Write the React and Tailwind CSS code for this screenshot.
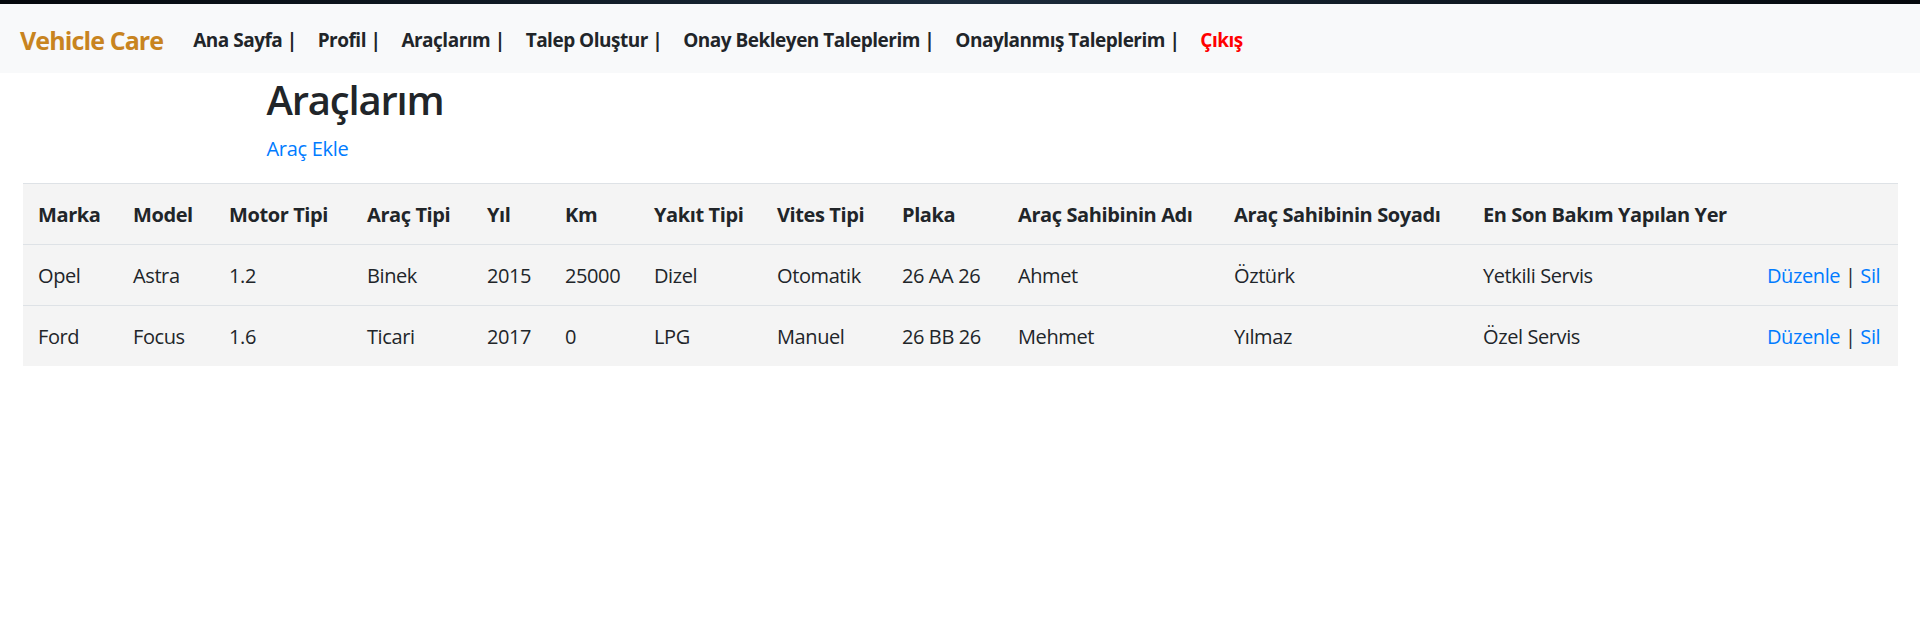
const navLinks = [
  'Ana Sayfa |',
  'Profil |',
  'Araçlarım |',
  'Talep Oluştur |',
  'Onay Bekleyen Taleplerim |',
  'Onaylanmış Taleplerim |',
]

const columns = [
  { title: 'Marka', w: 'w-[95px]' },
  { title: 'Model', w: 'w-[96px]' },
  { title: 'Motor Tipi', w: 'w-[138px]' },
  { title: 'Araç Tipi', w: 'w-[120px]' },
  { title: 'Yıl', w: 'w-[78px]' },
  { title: 'Km', w: 'w-[89px]' },
  { title: 'Yakıt Tipi', w: 'w-[123px]' },
  { title: 'Vites Tipi', w: 'w-[125px]' },
  { title: 'Plaka', w: 'w-[116px]' },
  { title: 'Araç Sahibinin Adı', w: 'w-[216px]' },
  { title: 'Araç Sahibinin Soyadı', w: 'w-[249px]' },
  { title: 'En Son Bakım Yapılan Yer', w: 'w-[284px]' },
  { title: '', w: 'w-[146px]' },
]

const vehicles = [
  ['Opel', 'Astra', '1.2', 'Binek', '2015', '25000', 'Dizel', 'Otomatik', '26 AA 26', 'Ahmet', 'Öztürk', 'Yetkili Servis'],
  ['Ford', 'Focus', '1.6', 'Ticari', '2017', '0', 'LPG', 'Manuel', '26 BB 26', 'Mehmet', 'Yılmaz', 'Özel Servis'],
]

const App = () => {
  return (
    <div className="min-h-screen bg-white text-[#212529] font-['Open_Sans',sans-serif]">

      {/* background strip above the navbar */}
      <div className="h-[4px] bg-gradient-to-r from-[#05080c] via-[#1c2c3c] to-[#05080c]"></div>

      <nav className="h-[69px] bg-[#f8f9fa] flex items-center pt-[4px] pl-[20px]">
        <span className="text-[25px] font-bold text-[#c8841f] tracking-[-0.9px] mr-[30px]">Vehicle Care</span>
        <ul className="flex items-center gap-[21px] text-[19px] font-bold tracking-[-0.5px]">
          {navLinks.map((link) => (
            <li key={link} className="whitespace-nowrap">{link}</li>
          ))}
          <li className="text-[#ff0000]">Çıkış</li>
        </ul>
      </nav>

      <div className="mx-auto w-[1425px] px-[19px] pt-[3px]">
        <h2 className="text-[40px] font-semibold leading-[48px] mb-[10px] tracking-[-1.2px]">Araçlarım</h2>
        <p className="text-[20px] leading-[30px] mb-[19px]">
          <a className="text-[#007bff] tracking-[-0.3px]">Araç Ekle</a>
        </p>
      </div>

      <div className="px-[23px]">
        <table className="table-fixed w-[1875px] bg-[#f4f4f4] text-[20px] leading-[30px] tracking-[-0.4px]">
          <colgroup>
            {columns.map((c, i) => <col key={i} className={c.w} />)}
          </colgroup>
          <thead>
            <tr>
              {columns.map((c, i) => (
                <th key={i} className="text-left font-bold px-[15px] pt-[16px] pb-[14px] border-t border-[#dee2e6] whitespace-nowrap">{c.title}</th>
              ))}
            </tr>
          </thead>
          <tbody>
            {vehicles.map((row) => (
              <tr key={row[8]}>
                {row.map((cell, i) => (
                  <td key={i} className="px-[15px] pt-[16px] pb-[14px] border-t border-[#dee2e6] whitespace-nowrap">{cell}</td>
                ))}
                <td className="px-[15px] pt-[16px] pb-[14px] border-t border-[#dee2e6] whitespace-nowrap">
                  <a className="text-[#007bff]">Düzenle</a> | <a className="text-[#007bff]">Sil</a>
                </td>
              </tr>
            ))}
          </tbody>
        </table>
      </div>

    </div>
  )
}

export default App
